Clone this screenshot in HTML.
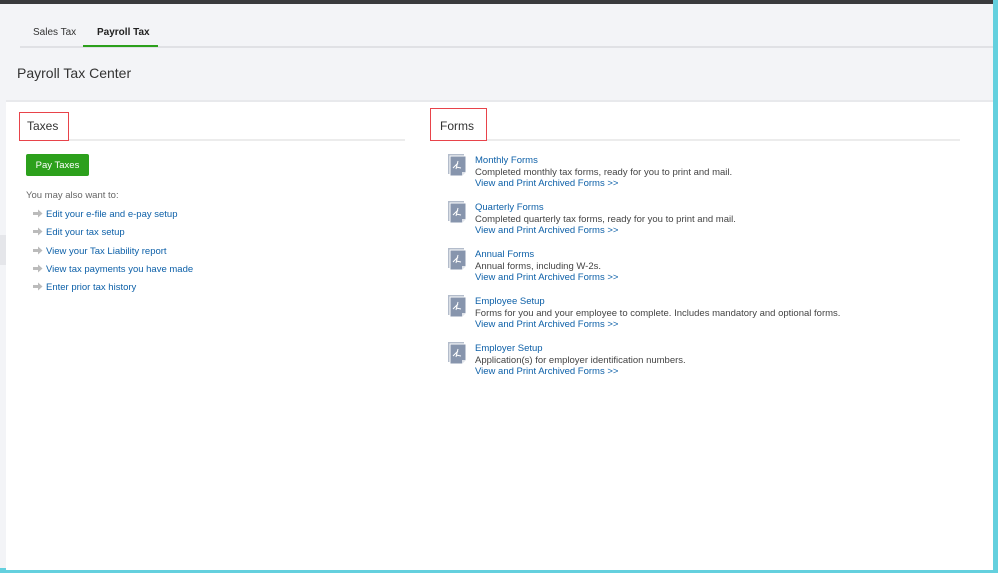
<!DOCTYPE html><html><head><style>
body{margin:0;width:998px;height:573px;background:#64d0de;font-family:"Liberation Sans",sans-serif;position:relative;overflow:hidden}
.pg{position:absolute;left:0;top:0;width:993px;height:568px;background:#f3f4f7}
.top{position:absolute;left:0;top:0;width:993px;height:4px;background:#393a3d}
.a{position:absolute;white-space:nowrap}
.w{position:absolute;left:6px;top:100px;width:987px;height:468px;background:#fff;border-top:2px solid #e8e9ec}
.ln{color:#0d60a8;font-size:9.5px}
.g{color:#444;font-size:9.5px}
</style></head><body><div class="pg">
<div class="top"></div>
<div class="a" style="left:20px;top:46px;width:973px;height:2px;background:#e0e1e5"></div>
<div class="a" style="left:83px;top:45px;width:75px;height:2px;background:#2ca01c"></div>
<div class="a" style="left:33px;top:27px;font-size:10px;color:#333">Sales Tax</div>
<div class="a" style="left:97px;top:27px;font-size:10px;color:#222;font-weight:bold">Payroll Tax</div>
<div class="a" style="left:17px;top:65px;font-size:14px;color:#333">Payroll Tax Center</div>
<div class="a" style="left:0;top:235px;width:6px;height:30px;background:#e5e6ea"></div>
<div class="w"></div>
<div class="a" style="left:19px;top:139px;width:386px;height:2px;background:#ececec"></div>
<div class="a" style="left:430px;top:139px;width:530px;height:2px;background:#ececec"></div>
<div class="a" style="left:19px;top:112px;width:48px;height:27px;border:1px solid #e8434a;background:#fff"></div>
<div class="a" style="left:27px;top:119px;font-size:12px;color:#333">Taxes</div>
<div class="a" style="left:430px;top:108px;width:55px;height:31px;border:1px solid #e8434a;background:#fff"></div>
<div class="a" style="left:440px;top:119px;font-size:12px;color:#333">Forms</div>
<div class="a" style="left:26px;top:154px;width:63px;height:22px;background:#2ca01c;border-radius:2px;color:#fff;font-size:9.5px;line-height:24px;text-align:center">Pay Taxes</div>
<div class="a g" style="left:26px;top:190px;color:#666">You may also want to:</div>
<div class="a ln" style="left:46px;top:209px">Edit your e-file and e-pay setup</div>
<div class="a ln" style="left:46px;top:227px">Edit your tax setup</div>
<div class="a ln" style="left:46px;top:246px">View your Tax Liability report</div>
<div class="a ln" style="left:46px;top:264px">View tax payments you have made</div>
<div class="a ln" style="left:46px;top:282px">Enter prior tax history</div>
<svg class="a" style="left:0;top:0" width="45" height="300"><g fill="#bbb">
<path d="M33 212h5v-2.5l4.5 4-4.5 4v-2.5h-5z"/><path d="M33 230h5v-2.5l4.5 4-4.5 4v-2.5h-5z"/><path d="M33 249h5v-2.5l4.5 4-4.5 4v-2.5h-5z"/><path d="M33 267h5v-2.5l4.5 4-4.5 4v-2.5h-5z"/><path d="M33 285h5v-2.5l4.5 4-4.5 4v-2.5h-5z"/></g></svg>
<svg class="a" style="left:448px;top:154px" width="22" height="230">
<defs><g id="ic"><rect x="0" y="0" width="16" height="20" fill="#b3bccb"/><path d="M2 2h16v16l-4 4H2z" fill="#8795ad" stroke="#fff" stroke-width="1"/><path d="M14 22v-4h4" fill="#dfe3ea"/><path d="M10 7l-2 8M8 13l5 1M10 9l-5 5" stroke="#fff" stroke-width="1" fill="none"/></g></defs>
<use href="#ic" y="0"/><use href="#ic" y="47"/><use href="#ic" y="94"/><use href="#ic" y="141"/><use href="#ic" y="188"/></svg>
<div class="a" style="left:475px;top:155px;line-height:11.5px">
<div class="ln">Monthly Forms</div><div class="g">Completed monthly tax forms, ready for you to print and mail.</div><div class="ln">View and Print Archived Forms &gt;&gt;</div></div>
<div class="a" style="left:475px;top:202px;line-height:11.5px">
<div class="ln">Quarterly Forms</div><div class="g">Completed quarterly tax forms, ready for you to print and mail.</div><div class="ln">View and Print Archived Forms &gt;&gt;</div></div>
<div class="a" style="left:475px;top:249px;line-height:11.5px">
<div class="ln">Annual Forms</div><div class="g">Annual forms, including W-2s.</div><div class="ln">View and Print Archived Forms &gt;&gt;</div></div>
<div class="a" style="left:475px;top:296px;line-height:11.5px">
<div class="ln">Employee Setup</div><div class="g">Forms for you and your employee to complete. Includes mandatory and optional forms.</div><div class="ln">View and Print Archived Forms &gt;&gt;</div></div>
<div class="a" style="left:475px;top:343px;line-height:11.5px">
<div class="ln">Employer Setup</div><div class="g">Application(s) for employer identification numbers.</div><div class="ln">View and Print Archived Forms &gt;&gt;</div></div>
</div></body></html>
